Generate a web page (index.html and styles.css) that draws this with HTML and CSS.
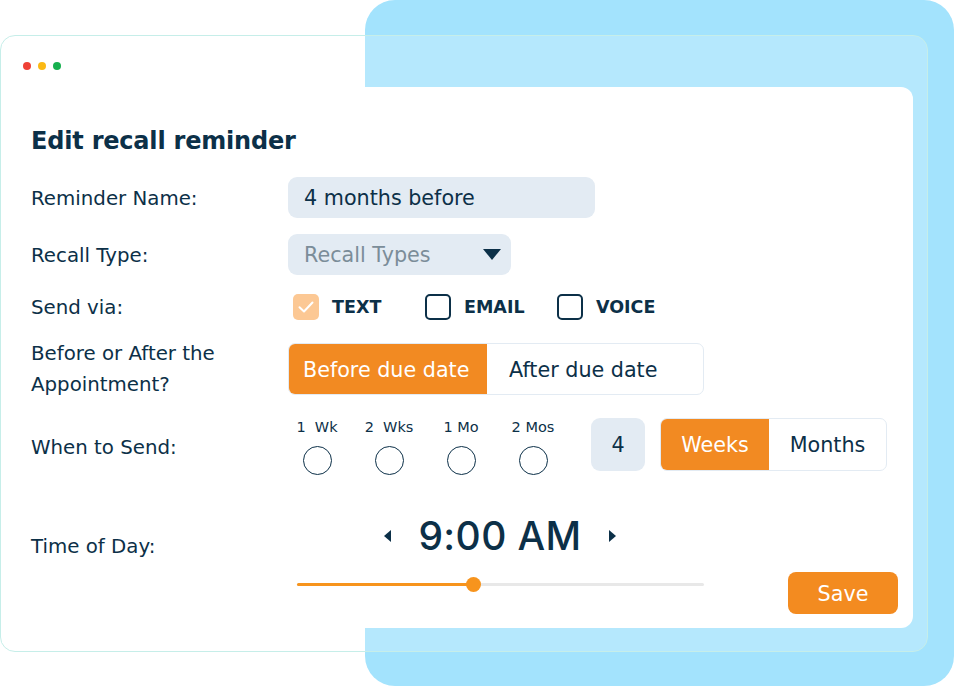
FILE: index.html
```html
<!DOCTYPE html>
<html lang="en">
<head>
<meta charset="utf-8">
<title>Edit recall reminder</title>
<link rel="stylesheet" href="styles.css">
</head>
<body>
<div class="stage">
  <div class="blue-shape"></div>
  <div class="window">
    <div class="dots">
      <span class="dot red"></span>
      <span class="dot yellow"></span>
      <span class="dot green"></span>
    </div>
    <div class="card">
      <h1 class="title">Edit recall reminder</h1>

      <div class="row row-name">
        <div class="label">Reminder Name:</div>
        <div class="field name-field">4 months before</div>
      </div>

      <div class="row row-type">
        <div class="label">Recall Type:</div>
        <div class="field select-field">
          <span class="placeholder">Recall Types</span>
          <svg class="caret" width="18" height="12" viewBox="0 0 18 12"><path d="M0 0 H18 L9 11 Z" fill="#0c3048"/></svg>
        </div>
      </div>

      <div class="row row-send">
        <div class="label">Send via:</div>
        <div class="checks">
          <div class="check-item">
            <span class="box checked">
              <svg width="16" height="12" viewBox="0 0 16 12"><path d="M1.5 6.2 L6 10.5 L14.5 1.5" fill="none" stroke="#fff" stroke-width="2" stroke-linecap="round" stroke-linejoin="round"/></svg>
            </span>
            <span class="check-text">TEXT</span>
          </div>
          <div class="check-item">
            <span class="box"></span>
            <span class="check-text">EMAIL</span>
          </div>
          <div class="check-item">
            <span class="box"></span>
            <span class="check-text">VOICE</span>
          </div>
        </div>
      </div>

      <div class="row row-when-appt">
        <div class="label two-line">Before or After the<br>Appointment?</div>
        <div class="segment seg-due">
          <div class="seg-opt active before">Before due date</div>
          <div class="seg-opt after">After due date</div>
        </div>
      </div>

      <div class="row row-send-time">
        <div class="label">When to Send:</div>
        <div class="send-controls">
          <div class="radios">
            <div class="radio-item"><span class="radio-label">1&nbsp; Wk</span><span class="radio"></span></div>
            <div class="radio-item"><span class="radio-label">2&nbsp; Wks</span><span class="radio"></span></div>
            <div class="radio-item"><span class="radio-label">1 Mo</span><span class="radio"></span></div>
            <div class="radio-item"><span class="radio-label">2 Mos</span><span class="radio"></span></div>
          </div>
          <div class="num-box">4</div>
          <div class="segment seg-unit">
            <div class="seg-opt active weeks">Weeks</div>
            <div class="seg-opt months">Months</div>
          </div>
        </div>
      </div>

      <div class="row row-time">
        <div class="label time-label">Time of Day:</div>
        <div class="time-block">
          <div class="time-line">
            <svg class="arrow" width="8" height="12" viewBox="0 0 8 12"><path d="M7 0 V12 L0 6 Z" fill="#0c3048"/></svg>
            <span class="time-text">9:00 AM</span>
            <svg class="arrow" width="8" height="12" viewBox="0 0 8 12"><path d="M1 0 V12 L8 6 Z" fill="#0c3048"/></svg>
          </div>
          <div class="slider">
            <div class="slider-fill" style="width: 176px"></div>
            <div class="slider-thumb" style="left: 176px"></div>
          </div>
        </div>
        <button class="save">Save</button>
      </div>
    </div>
  </div>
</div>
</body>
</html>
```

FILE: styles.css
```css
* { box-sizing: border-box; }

html, body {
  margin: 0;
  padding: 0;
  background: #ffffff;
}

body {
  font-family: "DejaVu Sans", "Open Sans", sans-serif;
  color: #0c3048;
  width: 954px;
  height: 686px;
  overflow: hidden;
}

.stage {
  position: relative;
  width: 954px;
  height: 686px;
  padding-top: 35px;
}

.blue-shape {
  position: absolute;
  left: 365px;
  top: 0;
  width: 589px;
  height: 686px;
  border-radius: 30px;
  background: #a3e3fd;
}

.window {
  position: relative;
  width: 928px;
  height: 617px;
  border: 1px solid #c6eee9;
  border-radius: 15px;
  background: rgba(255, 255, 255, 0.2);
  padding: 26px 14px 0 14px;
}

.dots {
  display: flex;
  gap: 7px;
  padding-left: 8px;
  height: 8px;
}

.dot {
  width: 8px;
  height: 8px;
  border-radius: 50%;
}
.dot.red { background: #ef4136; }
.dot.yellow { background: #fbb914; }
.dot.green { background: #16b04e; }

.card {
  margin-top: 17px;
  width: 898px;
  height: 541px;
  background: #ffffff;
  border-radius: 12px;
  padding: 39px 15px 0 16px;
}

.title {
  margin: 0;
  font-size: 24px;
  line-height: 30px;
  font-weight: 700;
  letter-spacing: -0.2px;
}

.row {
  display: grid;
  grid-template-columns: 257px 1fr;
  align-items: center;
}

.label {
  font-size: 19.8px;
  line-height: 24px;
  font-weight: 400;
  padding-top: 2px;
}

.row-name { margin-top: 21px; }
.row-type { margin-top: 16px; }
.row-send { margin-top: 19px; }
.row-when-appt { margin-top: 18px; }
.row-send-time { margin-top: 18px; }

.field {
  height: 41px;
  border-radius: 9px;
  background: #e3ebf3;
  font-size: 20.7px;
  display: flex;
  align-items: center;
  padding: 1px 16px 0 16px;
}

.name-field { width: 307px; }

.select-field {
  width: 223px;
  justify-content: space-between;
  padding-right: 10px;
}

.placeholder { color: #7b8d99; }
.caret { margin-top: 0; }

.checks {
  display: flex;
  padding-left: 5px;
  height: 26px;
}

.check-item {
  width: 132px;
  display: flex;
  align-items: center;
  gap: 13px;
}

.box {
  width: 26px;
  height: 26px;
  border: 2px solid #0c3048;
  border-radius: 5px;
  display: flex;
  align-items: center;
  justify-content: center;
}

.box.checked {
  border: none;
  background: #fcc894;
}

.check-text {
  font-size: 17.5px;
  font-weight: 700;
}

.two-line { line-height: 31px; padding-top: 0; }

.segment {
  display: flex;
  border: 1.5px solid #e3ebf3;
  border-radius: 7px;
  overflow: hidden;
  font-size: 20.7px;
  background: #ffffff;
}

.seg-due { width: 416px; height: 52px; }

.seg-opt {
  display: flex;
  align-items: center;
  padding-top: 1px;
}

.seg-opt.active {
  background: #f28a22;
  color: #ffffff;
}

.before { width: 198px; padding-left: 14px; }
.after { flex: 1; padding-left: 22px; }

.send-controls {
  display: flex;
  align-items: flex-start;
}

.radios {
  display: flex;
  gap: 14px;
}

.radio-item {
  width: 58px;
  display: flex;
  flex-direction: column;
  align-items: center;
}

.radio-label {
  font-size: 14.5px;
  line-height: 18px;
  white-space: nowrap;
}

.radio {
  margin-top: 10px;
  width: 29px;
  height: 29px;
  border: 1.5px solid #0c3048;
  border-radius: 50%;
}

.num-box {
  margin-left: 29px;
  width: 54px;
  height: 53px;
  background: #e3ebf3;
  border-radius: 9px;
  display: flex;
  align-items: center;
  justify-content: center;
  font-size: 20.7px;
}

.seg-unit {
  margin-left: 15px;
  width: 227px;
  height: 53px;
}

.weeks { width: 108px; justify-content: center; }
.months { flex: 1; justify-content: center; }

.row-time {
  grid-template-columns: 257px 416px 1fr;
  align-items: start;
  margin-top: 35px;
}

.time-label { margin-top: 23px; }

.time-block {
  display: flex;
  flex-direction: column;
  align-items: stretch;
}

.time-line {
  height: 50px;
  display: flex;
  align-items: center;
  justify-content: center;
  gap: 26px;
  padding-left: 8px;
}

.time-text {
  font-family: "Inter", "Roboto", sans-serif;
  font-size: 39px;
  font-weight: 500;
  letter-spacing: 0.4px;
}

.arrow { margin-top: 2px; }

.slider {
  position: relative;
  margin-top: 23px;
  margin-left: 9px;
  width: 407px;
  height: 3px;
  background: #e8e8e8;
  border-radius: 2px;
}

.slider-fill {
  height: 3px;
  background: #f7941d;
  border-radius: 2px;
}

.slider-thumb {
  position: absolute;
  top: -6px;
  width: 15px;
  height: 15px;
  margin-left: -7px;
  border-radius: 50%;
  background: #f7941d;
}

.save {
  justify-self: end;
  margin-top: 62px;
  width: 110px;
  height: 42px;
  border: none;
  border-radius: 8px;
  background: #f38b20;
  color: #ffffff;
  font-family: "DejaVu Sans", sans-serif;
  font-size: 20.7px;
  padding: 1px 0 0 0;
}
```
